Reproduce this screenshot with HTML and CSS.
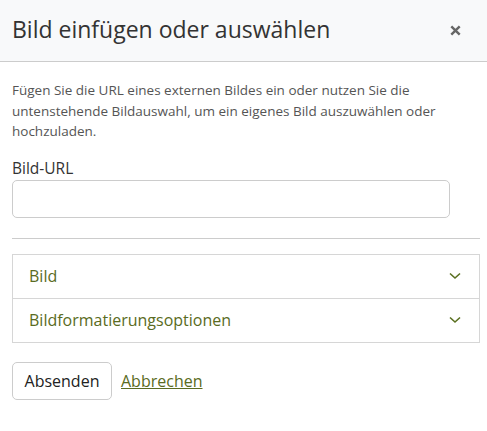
FILE: index.html
```html
<!DOCTYPE html>
<html lang="de">
<head>
<meta charset="utf-8">
<title>Bild einfügen oder auswählen</title>
<link rel="stylesheet" href="styles.css">
</head>
<body>
<div class="dialog">
  <div class="header">
    <h1 class="title">Bild einfügen oder auswählen</h1>
    <button class="close" aria-label="Schließen">
      <svg width="11" height="11" viewBox="0 0 11 11"><path d="M1.3 1.3L9.7 9.7M9.7 1.3L1.3 9.7" stroke="#666" stroke-width="2.4" stroke-linecap="butt"/></svg>
    </button>
  </div>
  <div class="body">
    <p class="intro">Fügen Sie die URL eines externen Bildes ein oder nutzen Sie die untenstehende Bildauswahl, um ein eigenes Bild auszuwählen oder hochzuladen.</p>
    <label class="label" for="url">Bild-URL</label>
    <input class="input" id="url" type="text">
    <hr class="rule">
    <div class="accordion">
      <div class="acc-item">
        <span class="acc-title">Bild</span>
        <svg class="chev" width="12" height="8" viewBox="0 0 12 8"><path d="M1 1.5L6 6L11 1.5" fill="none" stroke="#5a7020" stroke-width="1.6"/></svg>
      </div>
      <div class="acc-item">
        <span class="acc-title">Bildformatierungsoptionen</span>
        <svg class="chev" width="12" height="8" viewBox="0 0 12 8"><path d="M1 1.5L6 6L11 1.5" fill="none" stroke="#5a7020" stroke-width="1.6"/></svg>
      </div>
    </div>
    <div class="actions">
      <button class="btn">Absenden</button>
      <a class="link" href="#">Abbrechen</a>
    </div>
  </div>
</div>
</body>
</html>
```
FILE: styles.css
```css
* { box-sizing: border-box; }
html, body { margin: 0; padding: 0; background: #fff; }
body {
  font-family: "Open Sans", "Liberation Sans", sans-serif;
  color: #333;
  width: 487px;
  height: 431px;
  overflow: hidden;
}
.header {
  height: 62px;
  background: #f8f9fa;
  border-bottom: 1px solid #ccc;
  display: flex;
  align-items: center;
  justify-content: space-between;
  padding: 0 26px 0 12px;
}
.title {
  margin: 0;
  font-size: 23px;
  font-weight: 400;
  color: #333;
  line-height: 1.2;
  padding-bottom: 2px;
}
.close {
  border: 0;
  background: none;
  padding: 0;
  display: flex;
  cursor: pointer;
}
.body {
  padding: 18px 7px 0 12px;
}
.intro {
  margin: 0 0 15px;
  font-size: 13.5px;
  line-height: 20.5px;
  color: #555;
  padding-right: 20px;
}
.label {
  display: block;
  font-size: 15.5px;
  color: #333;
  margin-bottom: 1px;
}
.input {
  display: block;
  width: 438px;
  height: 38px;
  border: 1px solid #ccc;
  border-radius: 5px;
  background: #fff;
}
.rule {
  margin: 20px 0 15px;
  border: 0;
  border-top: 1px solid #ccc;
}
.accordion {
  border: 1px solid #d6d6d6;
}
.acc-item {
  height: 43px;
  display: flex;
  align-items: center;
  justify-content: space-between;
  padding: 0 18px 0 16px;
}
.acc-item + .acc-item {
  border-top: 1px solid #d6d6d6;
  height: 44px;
}
.acc-title {
  font-size: 16px;
  color: #5a6b22;
}
.chev { display: block; }
.actions {
  display: flex;
  align-items: center;
  gap: 9px;
  margin-top: 19px;
}
.btn {
  font-family: inherit;
  font-size: 16px;
  color: #222;
  background: #fff;
  border: 1px solid #ccc;
  border-radius: 5px;
  height: 38px;
  width: 100px;
  padding: 0;
}
.link {
  font-size: 16px;
  color: #5a6b22;
  text-decoration: underline;
}
```
